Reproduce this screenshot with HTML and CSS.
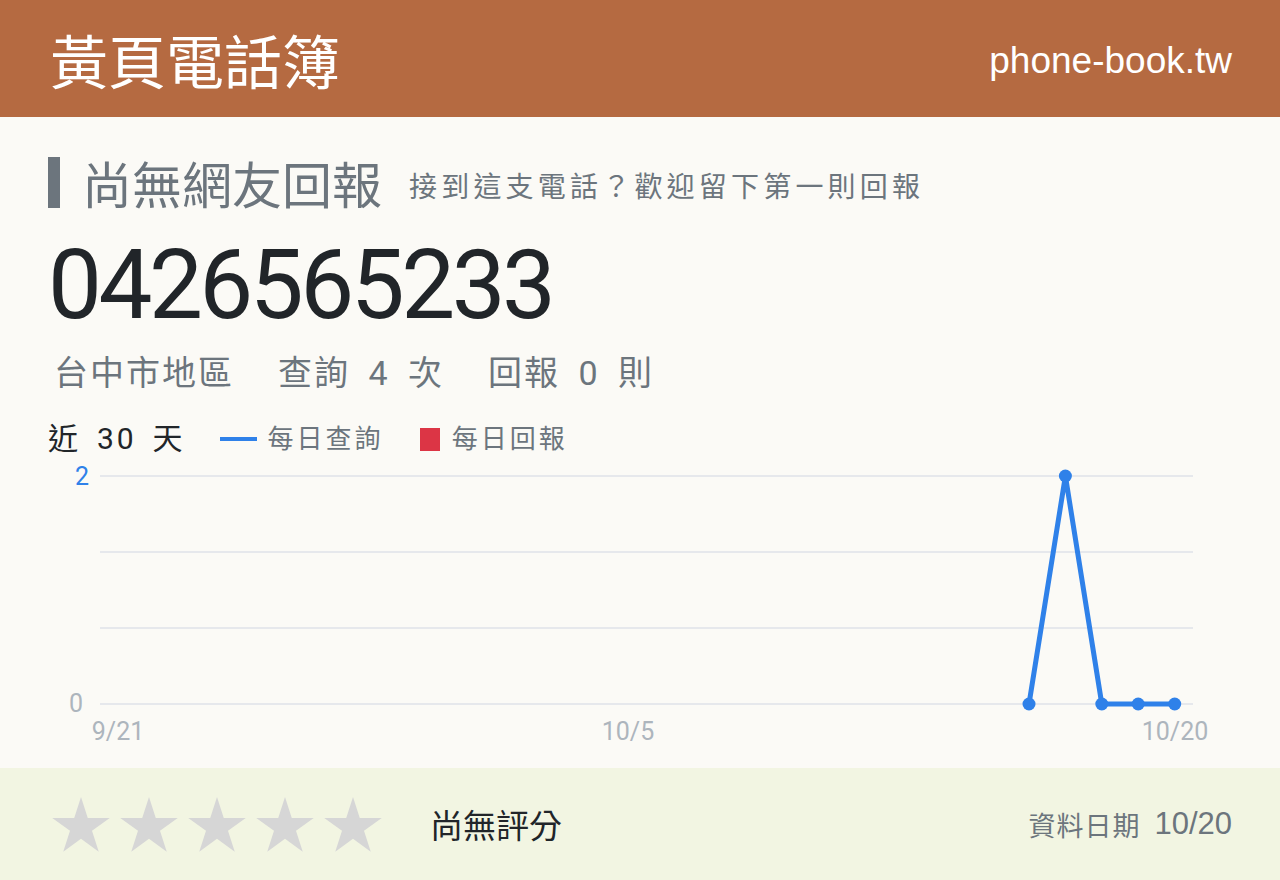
FILE: index.html
```html
<!DOCTYPE html>
<html lang="zh-Hant">
  <head>
    <meta charset="UTF-8" />
    <meta name="viewport" content="width=device-width, initial-scale=1.0" />
    <title>0426565233 | 黃頁電話簿</title>
    <link rel="stylesheet" href="styles.css">
  </head>
  <body>
    <!-- Site Header -->
    <header class="site-header">
      <div class="brand">黃頁電話簿</div>
      <div class="domain">phone-book.tw</div>
    </header>

    <main class="content">
      <!-- Report Status -->
      <div class="status">
        <h2 class="status-title">尚無網友回報</h2>
        <span class="status-hint">接到這支電話？歡迎留下第一則回報</span>
      </div>

      <h1 class="number">0426565233</h1>
      <p class="stats">
        <span>台中市地區</span>
        <span>查詢 4 次</span>
        <span>回報 0 則</span>
      </p>

      <!-- Chart Legend -->
      <div class="legend">
        <span class="legend-range">近 30 天</span>
        <span class="legend-item"><i class="swatch swatch-line"></i>每日查詢</span>
        <span class="legend-item"><i class="swatch swatch-box"></i>每日回報</span>
      </div>

      <!-- Daily lookups, 9/21 - 10/20 -->
      <svg class="chart" width="1184" height="290" viewBox="0 0 1184 290">
        <g class="grid">
          <line x1="52" y1="16" x2="1145" y2="16" />
          <line x1="52" y1="92" x2="1145" y2="92" />
          <line x1="52" y1="168" x2="1145" y2="168" />
          <line x1="52" y1="244" x2="1145" y2="244" />
        </g>
        <text class="tick tick-max" x="41" y="25" text-anchor="end">2</text>
        <text class="tick" x="35" y="252" text-anchor="end">0</text>
        <text class="tick" x="70" y="280" text-anchor="middle">9/21</text>
        <text class="tick" x="580" y="280" text-anchor="middle">10/5</text>
        <text class="tick" x="1127" y="280" text-anchor="middle">10/20</text>
        <polyline class="series" points="981,244 1017.4,16 1053.8,244 1090.2,244 1126.7,244" />
        <g class="points">
          <circle cx="981" cy="244" r="6.5" />
          <circle cx="1017.4" cy="16" r="6.5" />
          <circle cx="1053.8" cy="244" r="6.5" />
          <circle cx="1090.2" cy="244" r="6.5" />
          <circle cx="1126.7" cy="244" r="6.5" />
        </g>
      </svg>
    </main>

    <!-- Rating Bar -->
    <footer class="rating-bar">
      <div class="stars">
        <svg class="star" viewBox="2 2.5 96 91"><path d="M50 2.6L61.2 37.1 97.6 37.1 68.2 58.5 79.4 93 50 71.7 20.6 93 31.8 58.5 2.4 37.1 38.8 37.1Z" /></svg>
        <svg class="star" viewBox="2 2.5 96 91"><path d="M50 2.6L61.2 37.1 97.6 37.1 68.2 58.5 79.4 93 50 71.7 20.6 93 31.8 58.5 2.4 37.1 38.8 37.1Z" /></svg>
        <svg class="star" viewBox="2 2.5 96 91"><path d="M50 2.6L61.2 37.1 97.6 37.1 68.2 58.5 79.4 93 50 71.7 20.6 93 31.8 58.5 2.4 37.1 38.8 37.1Z" /></svg>
        <svg class="star" viewBox="2 2.5 96 91"><path d="M50 2.6L61.2 37.1 97.6 37.1 68.2 58.5 79.4 93 50 71.7 20.6 93 31.8 58.5 2.4 37.1 38.8 37.1Z" /></svg>
        <svg class="star" viewBox="2 2.5 96 91"><path d="M50 2.6L61.2 37.1 97.6 37.1 68.2 58.5 79.4 93 50 71.7 20.6 93 31.8 58.5 2.4 37.1 38.8 37.1Z" /></svg>
      </div>
      <span class="rating-text">尚無評分</span>
      <div class="updated">
        <span class="updated-label">資料日期</span>
        <span class="updated-date">10/20</span>
      </div>
    </footer>
  </body>
</html>
```

FILE: styles.css
```css
/* Global Styles */
body {
  margin: 0;
  padding: 0;
  font-family: Roboto, "Noto Sans CJK TC", sans-serif;
  background-color: #fbfaf6; /* Off-white paper */
  color: #212529;
  width: 1280px;
  height: 880px;
  overflow: hidden;
}

h1,
h2,
p {
  margin: 0;
  font-weight: 400;
}

/* Site Header */
.site-header {
  height: 117px;
  background-color: #b56a41; /* Rust brown */
  color: #ffffff;
  display: flex;
  align-items: center;
  justify-content: space-between;
  padding: 0 48px 0 50px;
}

.brand {
  font-family: "Noto Sans CJK TC", sans-serif;
  font-size: 58px;
  line-height: 1;
}

.domain {
  font-family: "Liberation Sans", Arial, sans-serif;
  font-size: 37px;
  margin-top: 4px;
}

/* Main Content */
.content {
  height: 651px;
  box-sizing: border-box;
  padding: 40px 48px 0;
}

.status {
  display: flex;
  align-items: center;
  height: 51px;
  border-left: 12px solid #6c757d;
  padding-left: 22px;
  color: #6c757d;
}

.status-title {
  font-family: "Noto Sans CJK TC", sans-serif;
  font-size: 50px;
  line-height: 51px;
}

.status-hint {
  font-family: "Noto Sans CJK TC", sans-serif;
  font-size: 28px;
  letter-spacing: 4.2px;
  margin-left: 27px;
  margin-top: 4px;
}

.number {
  font-size: 96px;
  line-height: 100px;
  letter-spacing: -3.5px;
  margin-top: 27px;
  color: #212529;
}

.stats {
  display: flex;
  gap: 44px;
  font-size: 34px;
  line-height: 40px;
  letter-spacing: 2px;
  word-spacing: 8px;
  margin-top: 18px;
  padding-left: 6px;
  color: #6c757d;
}

/* Legend */
.legend {
  display: flex;
  align-items: center;
  height: 40px;
  margin-top: 26px;
}

.legend-range {
  font-size: 30px;
  line-height: 40px;
  letter-spacing: 3px;
  word-spacing: 5.5px;
  color: #212529;
  margin-right: 34px;
}

.legend-item {
  display: flex;
  align-items: center;
  font-size: 26px;
  line-height: 40px;
  letter-spacing: 3px;
  color: #6c757d;
  margin-right: 36px;
}

.swatch {
  display: inline-block;
  margin-right: 11px;
}

.swatch-line {
  width: 37px;
  height: 4px;
  background-color: #2f81e9;
}

.swatch-box {
  width: 20px;
  height: 23px;
  background-color: #dc3545;
  margin-right: 12px;
}

/* Chart */
.chart {
  display: block;
  margin-top: 1px;
}

.grid line {
  stroke: #e6e8ec;
  stroke-width: 2;
}

.tick {
  font-family: Roboto, sans-serif;
  font-size: 25px;
  fill: #adb5bd;
}

.tick-max {
  fill: #2f81e9;
}

.series {
  fill: none;
  stroke: #2f81e9;
  stroke-width: 5;
  stroke-linejoin: round;
}

.points circle {
  fill: #2f81e9;
}

/* Rating Bar */
.rating-bar {
  height: 112px;
  background-color: #f2f5e2; /* Pale green */
  display: flex;
  align-items: center;
  padding: 0 48px 0 52px;
}

.stars {
  display: flex;
  gap: 10px;
}

.star {
  width: 58px;
  height: 55px;
  fill: #d6d6d6;
}

.rating-text {
  font-family: "Noto Sans CJK TC", sans-serif;
  font-size: 33px;
  color: #212529;
  margin-left: 48px;
}

.updated {
  margin-left: auto;
  display: flex;
  align-items: center;
  gap: 14px;
  color: #6c757d;
}

.updated-label {
  font-family: "Noto Sans CJK TC", sans-serif;
  font-size: 27px;
  letter-spacing: 1px;
}

.updated-date {
  font-family: "Liberation Sans", Arial, sans-serif;
  font-size: 31px;
}
```
